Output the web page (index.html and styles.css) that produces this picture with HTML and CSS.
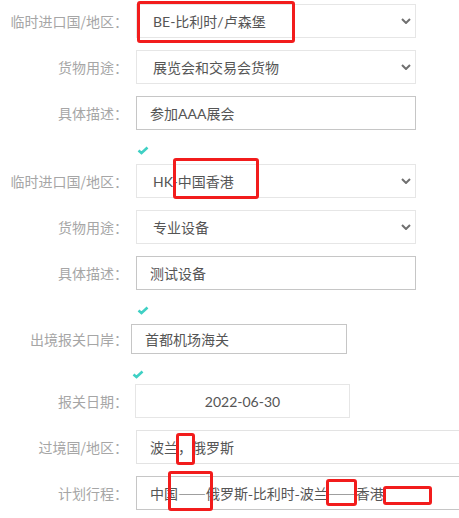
FILE: index.html
```html
<!DOCTYPE html>
<html lang="zh">
<head>
    <meta charset="UTF-8">
    <meta name="viewport" content="width=device-width, initial-scale=1.0">
    <title>临时进出境申报</title>
    <link rel="stylesheet" href="styles.css">
</head>
<body>

<div class="form">
    <!-- first country -->
    <div class="row">
        <span class="label">临时进口国/地区：</span>
        <div class="field select">
            <span>BE-比利时/卢森堡</span>
            <svg class="chevron" width="10" height="6" viewBox="0 0 10 6"><polyline points="1,1 5,5 9,1" /></svg>
            <span class="mark mark-a"></span>
        </div>
    </div>
    <div class="row">
        <span class="label">货物用途：</span>
        <div class="field select">
            <span>展览会和交易会货物</span>
            <svg class="chevron" width="10" height="6" viewBox="0 0 10 6"><polyline points="1,1 5,5 9,1" /></svg>
        </div>
    </div>
    <div class="row">
        <span class="label">具体描述：</span>
        <div class="field input">参加AAA展会</div>
    </div>

    <div class="check"><svg width="12" height="9" viewBox="0 0 12 9"><polyline points="1.5,4.5 4.5,7 10.5,1.5" /></svg></div>

    <!-- second country -->
    <div class="row">
        <span class="label">临时进口国/地区：</span>
        <div class="field select">
            <span>HK-中国香港</span>
            <svg class="chevron" width="10" height="6" viewBox="0 0 10 6"><polyline points="1,1 5,5 9,1" /></svg>
            <span class="mark mark-b"></span>
        </div>
    </div>
    <div class="row">
        <span class="label">货物用途：</span>
        <div class="field select">
            <span>专业设备</span>
            <svg class="chevron" width="10" height="6" viewBox="0 0 10 6"><polyline points="1,1 5,5 9,1" /></svg>
        </div>
    </div>
    <div class="row">
        <span class="label">具体描述：</span>
        <div class="field input">测试设备</div>
    </div>

    <div class="check"><svg width="12" height="9" viewBox="0 0 12 9"><polyline points="1.5,4.5 4.5,7 10.5,1.5" /></svg></div>

    <div class="row row-port">
        <span class="label">出境报关口岸：</span>
        <div class="field input port">首都机场海关</div>
    </div>

    <div class="check check-short"><svg width="12" height="9" viewBox="0 0 12 9"><polyline points="1.5,4.5 4.5,7 10.5,1.5" /></svg></div>

    <div class="row">
        <span class="label">报关日期：</span>
        <div class="field date">2022-06-30</div>
    </div>
    <div class="row">
        <span class="label">过境国/地区：</span>
        <div class="field input wide light">
            <span class="cjk">波兰，俄罗斯</span>
            <span class="mark mark-c"></span>
        </div>
    </div>
    <div class="row">
        <span class="label">计划行程：</span>
        <div class="field input wide">
            <span class="cjk">中国——俄罗斯-比利时-波兰——香港</span>
            <span class="mark mark-d"></span>
            <span class="mark mark-e"></span>
            <span class="mark mark-f"></span>
        </div>
    </div>
</div>

</body>
</html>
```

FILE: styles.css
```css
html, body {
    margin: 0;
    overflow: hidden;
    background: #fff;
}

body {
    font-family: "Lato", "Noto Sans CJK SC", sans-serif;
    font-size: 14px;
}

.form {
    display: flex;
    flex-direction: column;
    padding-top: 4px;
}

.row {
    display: flex;
    align-items: center;
    height: 34px;
    margin-bottom: 12px;
}

.label {
    width: 128px;
    flex-shrink: 0;
    text-align: right;
    color: #a6a6a6;
    font-family: "Noto Sans CJK SC", sans-serif;
}

.field {
    position: relative;
    box-sizing: border-box;
    height: 34px;
    width: 280px;
    margin-left: 8px;
    display: flex;
    align-items: center;
    color: #555;
    border: 1px solid #e6e6e6;
    white-space: nowrap;
}

.cjk {
    font-family: "Noto Sans CJK SC", sans-serif;
}

.select {
    justify-content: space-between;
    padding: 0 4px 0 16px;
}

.chevron polyline {
    fill: none;
    stroke: #707070;
    stroke-width: 2;
}

.input {
    padding-left: 13px;
    border-color: #c6c6c6;
}

.port {
    width: 216px;
    height: 30px;
    margin-left: 3px;
}

.row-port {
    height: 30px;
}

.date {
    width: 215px;
    margin-left: 7px;
    justify-content: center;
}

.wide {
    width: 340px;
    border-right: none;
}

.light {
    border-color: #e3e3e3;
}

.check {
    height: 22px;
    padding: 12px 0 0 137px;
    box-sizing: border-box;
    margin-top: -8px;
    margin-bottom: 8px;
}

.check svg {
    display: block;
}

.check-short {
    height: 18px;
    padding-left: 132px;
}

.check polyline {
    fill: none;
    stroke: #3fd0c4;
    stroke-width: 2.6;
}

/* red review marks */
.mark {
    position: absolute;
    border: 3px solid #f21c1c;
    border-radius: 3px;
    box-sizing: border-box;
}

.mark-a { left: 0; top: -4px; width: 158px; height: 42px; }
.mark-b { left: 36px; top: -7px; width: 86px; height: 41px; }
.mark-c { left: 39px; top: 2px; width: 19px; height: 32px; }
.mark-d { left: 31px; top: -6px; width: 45px; height: 40px; }
.mark-e { left: 189px; top: 2px; width: 31px; height: 27px; }
.mark-f { left: 246px; top: 9px; width: 49px; height: 19px; }
```
